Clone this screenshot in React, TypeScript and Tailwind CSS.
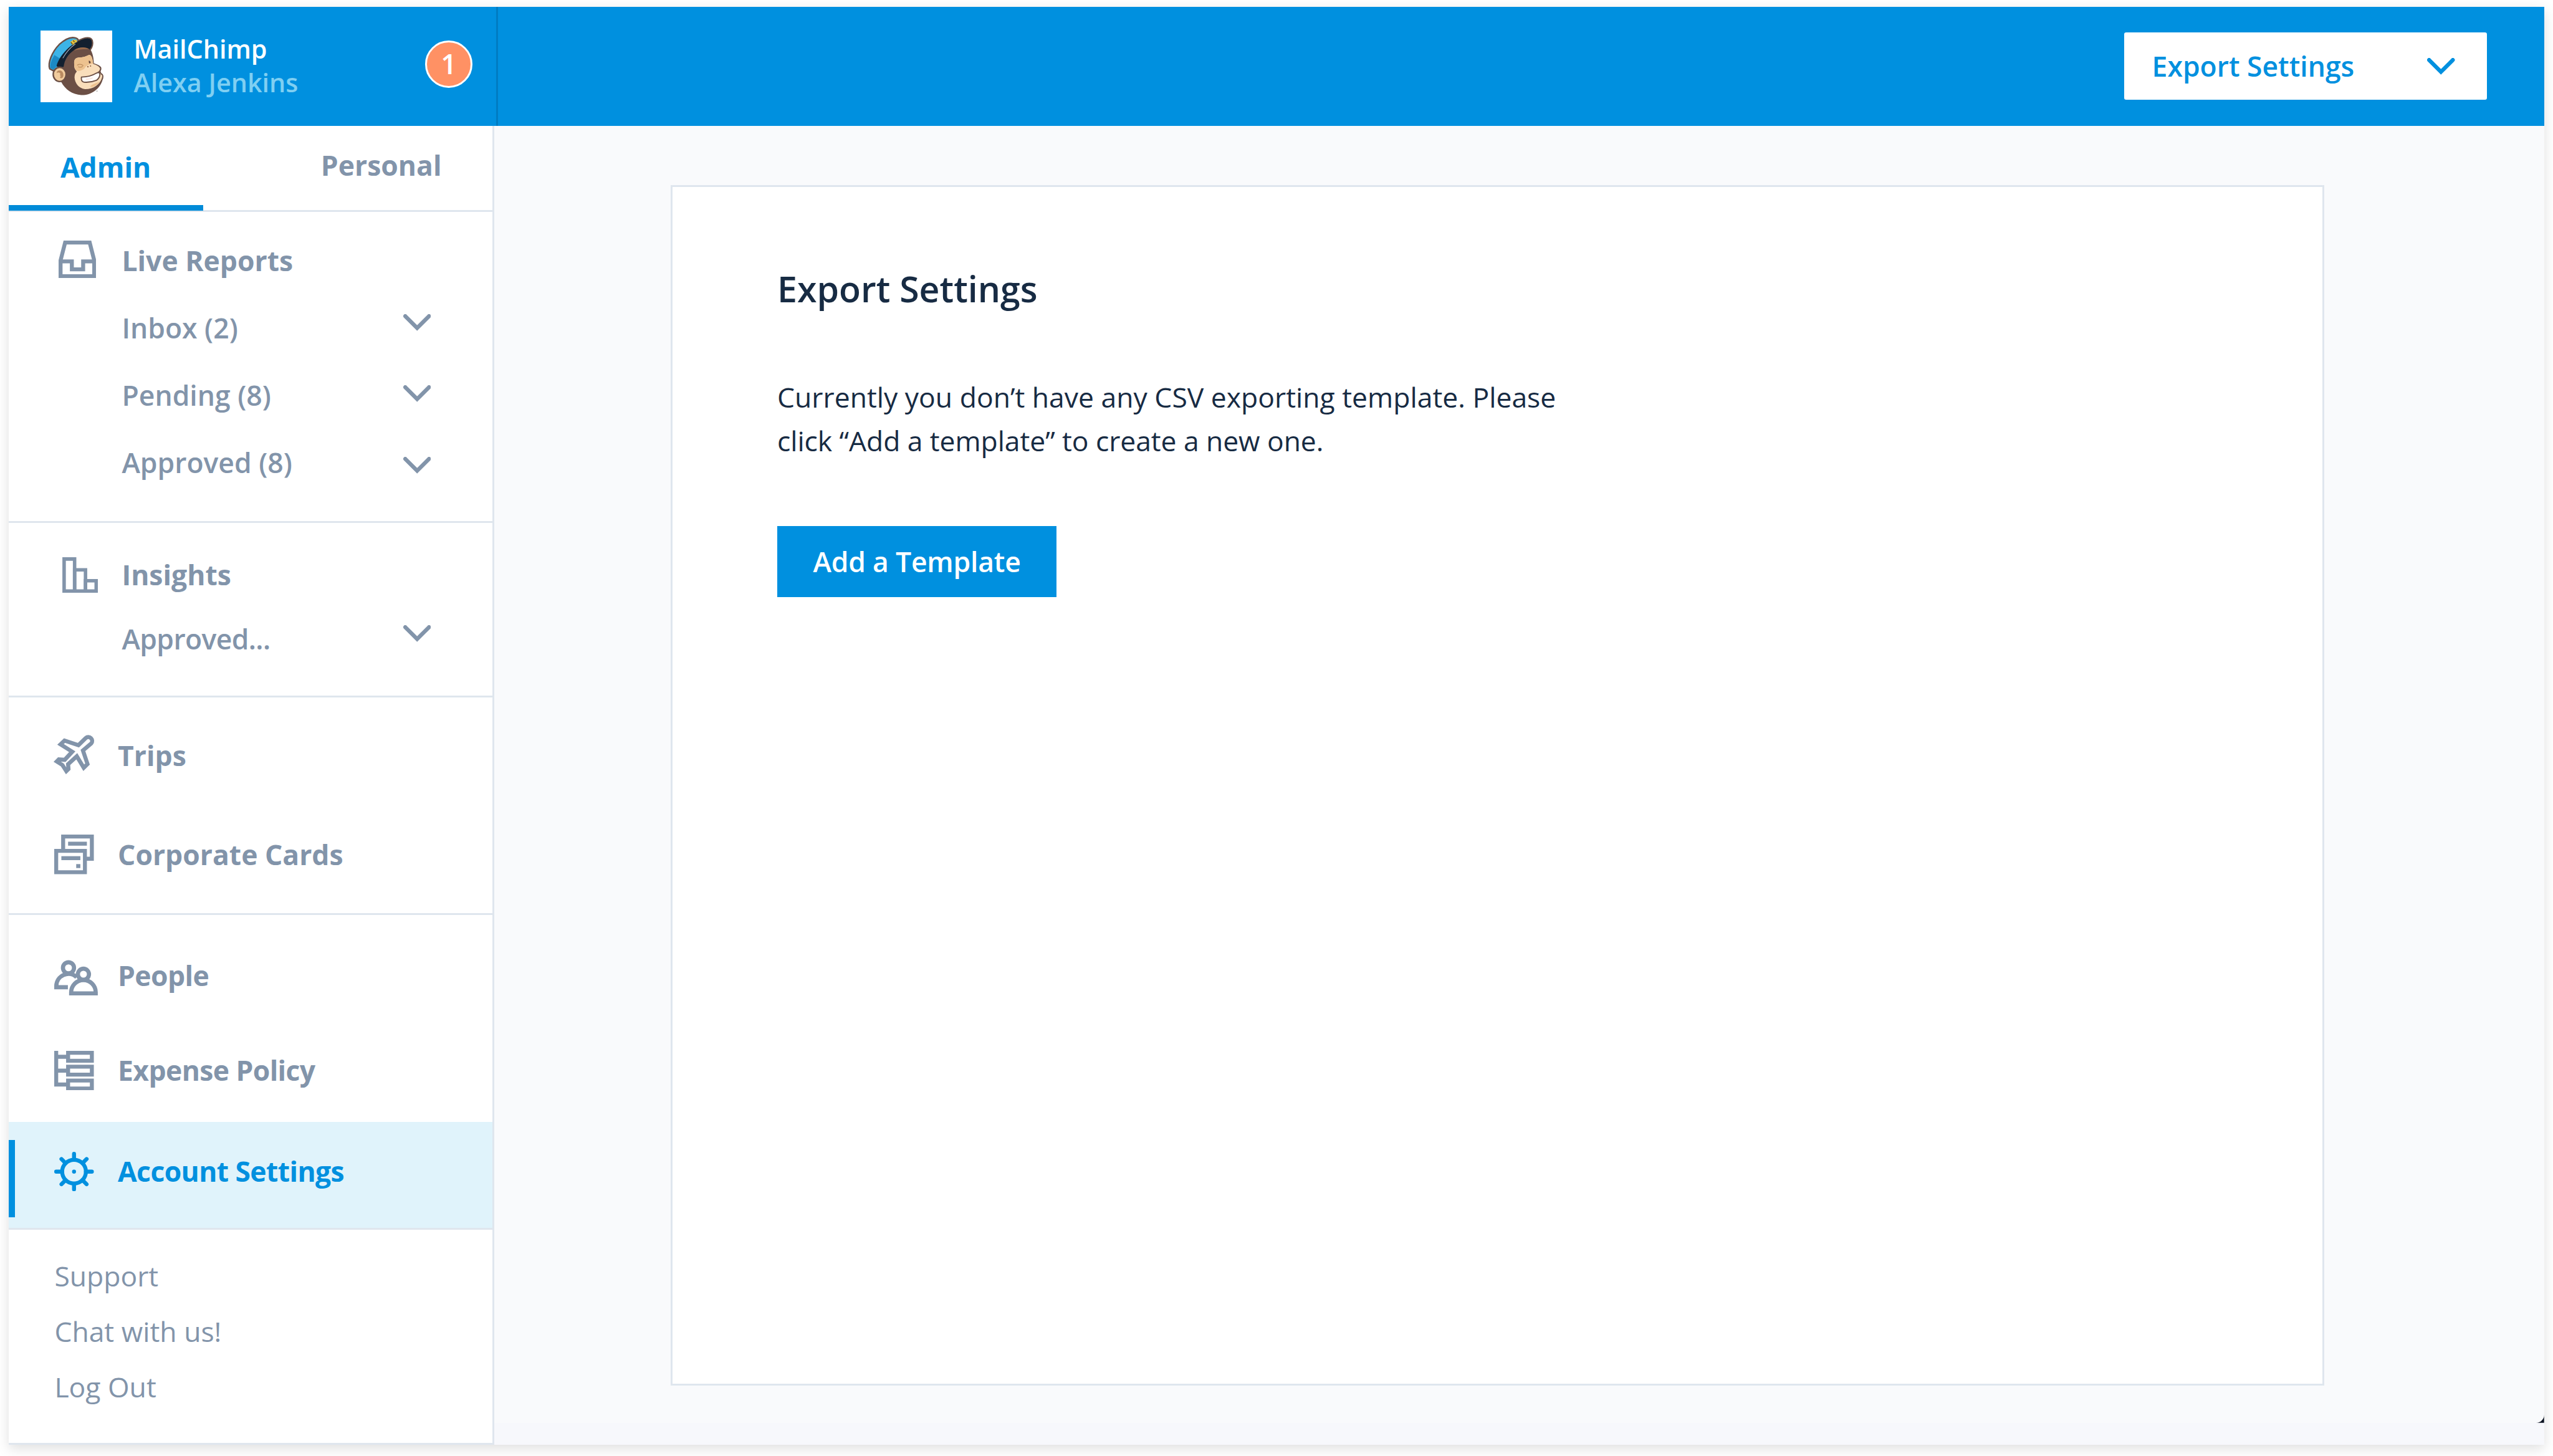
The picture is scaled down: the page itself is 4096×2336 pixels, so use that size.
import React from "react";

type IconProps = { className?: string };

function Chevron({ className = "" }: IconProps) {
  return (
    <svg viewBox="0 0 14 8.5" className={`h-[8.5px] w-[14px] shrink-0 ${className}`} fill="none" stroke="currentColor" strokeWidth="2" strokeLinecap="round">
      <path d="M1 1L7 7L13 1" />
    </svg>
  );
}

function InboxIcon() {
  return (
    <svg viewBox="0 0 19 19" className="h-[19px] w-[19px]" fill="none" stroke="currentColor" strokeWidth="2">
      <path d="M1 18V10L3.3 1H15.7L18 10V18Z" />
      <path d="M1 10.5H6.7V14.5H12.4V10.5H18" />
    </svg>
  );
}

function InsightsIcon() {
  return (
    <svg viewBox="0 0 18 18" className="h-[18px] w-[18px]" fill="none" stroke="currentColor" strokeWidth="1.75">
      <path d="M0.9 0.9H6.2V17.1H0.9Z" />
      <path d="M6.2 6.4H11.7V17.1H6.2Z" />
      <path d="M11.7 11.9H17.1V17.1H11.7Z" />
    </svg>
  );
}

function PlaneIcon() {
  return (
    <svg viewBox="0 0 20 20" className="h-5 w-5 overflow-visible" fill="none" stroke="currentColor" strokeWidth="2.05">
      <path d="M12.2 4.9L15.9 1.3A1.95 1.95 0 0 1 18.7 4L14.5 7.6L16.8 14.4L14.9 16.3L11.4 10.5L7 14.5L7.2 16.9L6.1 18L4.1 14.9L1.3 13.1L2.3 12.1L5.3 12.3L9.1 8.2L3.2 4.5L5.2 2.6Z" />
    </svg>
  );
}

function CardsIcon() {
  return (
    <svg viewBox="0 0 20 20" className="h-5 w-5" fill="none" stroke="currentColor" strokeWidth="2">
      <path d="M4.5 8V1H19V12.2H16" />
      <path d="M7 4.6H16.5" />
      <path d="M1 8.2H15.5V19H1Z" />
      <path d="M3.6 11.9H13.2" />
      <path d="M11.1 15.9H13.2" />
    </svg>
  );
}

function PeopleIcon() {
  return (
    <svg viewBox="0 0 22 18" className="h-[18px] w-[22px]" fill="none" stroke="currentColor" strokeWidth="2.1">
      <circle cx="7.2" cy="4" r="2.8" />
      <path d="M6.9 13.8H1.05V13.2A6.15 6.15 0 0 1 11.3 8.7" />
      <circle cx="14.75" cy="7.25" r="2.8" />
      <path d="M8.55 16.95V16.4A6.2 6.2 0 0 1 20.95 16.4V16.95Z" />
    </svg>
  );
}

function PolicyIcon() {
  return (
    <svg viewBox="0 0 20 20" className="h-5 w-5" fill="none" stroke="currentColor" strokeWidth="2">
      <path d="M1 0V17H7" />
      <path d="M1 3H7M1 10H7" />
      <path d="M7 1H19V5H7Z" />
      <path d="M7 8H19V12H7Z" />
      <path d="M7 15H19V19H7Z" />
    </svg>
  );
}

function GearIcon() {
  return (
    <svg viewBox="0 0 20 20" className="h-5 w-5" fill="none" stroke="currentColor" strokeWidth="2" strokeLinecap="round">
      <circle cx="10" cy="10" r="6" />
      <circle cx="10" cy="10" r="1" fill="currentColor" stroke="none" />
      <path d="M10 1V4M10 16V19M1 10H4M16 10H19M3.65 3.65L5.75 5.75M14.25 14.25L16.35 16.35M16.35 3.65L14.25 5.75M5.75 14.25L3.65 16.35" />
    </svg>
  );
}

function ChimpLogo() {
  return (
    <svg viewBox="66 36 432 432" className="h-9 w-9 shrink-0 bg-white">
      <path d="M190 345C185 300 195 200 250 150C290 120 345 125 368 150C384 175 388 205 389 234Q424 244 434 260Q438 272 430 283Q430 292 443 300Q452 314 442 335C425 392 370 429 312 427C260 424 215 395 190 345Z" fill="#6b4f45" />
      <path d="M143 279L122 268C108 235 135 165 180 120C215 88 250 74 275 80Q292 84 296 96L180 262Z" fill="#3db4e7" stroke="#6b4f45" strokeWidth="9" strokeLinejoin="round" />
      <path d="M150 184C130 220 122 245 127 264L145 273L164 252C170 235 178 220 186 207Z" fill="#1c8ac4" />
      <path d="M163 253C172 205 225 135 298 98C338 76 370 76 379 98C385 120 376 140 365 153C345 134 300 134 270 154C232 180 212 212 206 256Q185 262 163 253Z" fill="#13202f" />
      <path d="M296 97C338 73 372 74 380 97C386 120 377 140 366 154" fill="none" stroke="#6b4f45" strokeWidth="8" />
      <path d="M272 153C300 134 340 132 362 150C340 148 300 150 272 156Z" fill="#9a6b4b" />
      <path d="M202 202C220 170 245 140 276 118" fill="none" stroke="#a9b4c2" strokeWidth="4" strokeLinecap="round" />
      <path d="M246 104L258 98L262 90L272 94L284 90L288 106L276 110L262 124L254 118Z" fill="#e6c03c" />
      <path d="M250 107L260 120M264 96L272 106" stroke="#2c2a25" strokeWidth="4" />
      <ellipse cx="182" cy="302" rx="39" ry="43" fill="#f0cb9c" stroke="#6b4f45" strokeWidth="9" />
      <path d="M164 294C164 272 196 272 202 292C208 308 204 325 190 325C182 324 184 316 190 312Q180 306 187 298Q178 284 164 294Z" fill="#b98a60" />
      <path d="M270 240C268 210 278 200 300 199C335 200 350 184 365 183C378 190 383 215 385 238Q421 249 427 266Q424 282 408 290Q430 290 432 302Q443 305 439 320C426 365 385 392 335 391C298 386 275 355 272 320Q272 297 286 284Q268 268 270 240Z" fill="#f9debb" />
      <path d="M270 240C268 210 278 200 300 199C335 200 350 184 365 183C378 190 383 215 384 236Q345 240 330 268Q305 285 286 280Q268 266 270 240Z" fill="#edc28f" />
      <path d="M366 378C376 360 400 358 424 346C408 368 390 380 366 378Z" fill="#edc28f" />
      <path d="M290 245Q308 234 324 248M296 256Q308 262 320 254" fill="none" stroke="#bd8e5e" strokeWidth="5" strokeLinecap="round" />
      <path d="M359 217Q357 228 362 235Q370 236 370 228Q368 220 359 217Z" fill="#5c4038" />
      <circle cx="353" cy="255" r="4.500" fill="#9a6b4b" />
      <circle cx="369" cy="251" r="4" fill="#9a6b4b" />
      <path d="M314 318Q365 318 405 294Q424 284 426 302Q424 326 404 338Q370 352 330 349Q310 345 314 318Z" fill="#ffffff" stroke="#6b4f45" strokeWidth="7" strokeLinejoin="round" />
      <path d="M340 330Q365 333 382 322" fill="none" stroke="#f6d9cf" strokeWidth="5" />
      <path d="M403 403H413" stroke="#b4b4b4" strokeWidth="5" />
    </svg>
  );
}

function NavItem({ icon, label, tight = false }: { icon: React.ReactNode; label: string; tight?: boolean }) {
  return (
    <div className="flex h-5 items-start pl-[23px] font-bold">
      <span className="mt-[0.5px] flex h-5 w-8 items-center">{icon}</span>
      <span className={`mt-[0.4px] ${tight ? "tracking-[-0.19px]" : ""}`}>{label}</span>
    </div>
  );
}

function Header() {
  return (
    <header className="flex h-[60px] items-start bg-[#0090df] text-white">
      <div className="flex h-full w-[247px] items-start border-r border-[#007cc2] pl-4">
        <div className="mt-3">
          <ChimpLogo />
        </div>
        <div className="mt-[12.6px] ml-[11px] flex-1 text-[13px] leading-[17px] font-semibold">
          <div>MailChimp</div>
          <div className="text-[#7fcff2]">Alexa Jenkins</div>
        </div>
        <div className="mt-[17px] mr-3 flex h-6 w-6 items-center justify-center rounded-full border border-white bg-[#ff9164] pb-[0.5px] text-sm leading-none font-semibold">1</div>
      </div>
      <button className="mt-[13px] mr-[29px] ml-auto flex h-[34px] w-[183px] items-center justify-between rounded-[1px] bg-white pr-4 pl-[14px] text-sm font-semibold text-[#0090df]">
        <span className="pb-[0.2px]">Export Settings</span>
        <Chevron />
      </button>
    </header>
  );
}

function Sidebar() {
  return (
    <aside className="flex w-[245px] shrink-0 flex-col border-r border-[#dfe6ee] bg-white text-sm leading-5 text-[#8294aa]">
      <div className="relative flex h-[43.5px] border-b border-[#dfe6ee] font-bold">
        <div className="w-[157.5px] pt-[10.9px] pl-[26px] text-[#0090df]">Admin</div>
        <div className="pt-[9.9px]">Personal</div>
        <div className="absolute top-[40px] left-0 h-[3px] w-[98px] bg-[#008bd8]" />
      </div>

      <section className="h-[157px] border-b border-[#dfe6ee] pt-[14px]">
        <div className="flex h-[27px] items-start pl-[25px] font-bold">
          <span className="mt-[0.5px] w-8">
            <InboxIcon />
          </span>
          <span className="mt-[0.4px]">Live Reports</span>
        </div>
        <div className="flex justify-between pr-[31px] pl-[57px] font-semibold">
          <div className="pt-[0.4px] leading-[34px]">
            <div>Inbox (2)</div>
            <div>Pending (8)</div>
            <div>Approved (8)</div>
          </div>
          <div className="flex flex-col gap-[27.5px] pt-[10.6px]">
            <Chevron />
            <Chevron />
            <Chevron />
          </div>
        </div>
      </section>

      <section className="h-[88px] border-b border-[#dfe6ee] pt-4">
        <div className="flex h-8 items-start pl-[27px] font-bold">
          <span className="mt-[1.5px] w-[30px]">
            <InsightsIcon />
          </span>
          <span className="mt-[0.2px]">Insights</span>
        </div>
        <div className="flex items-start justify-between pr-[31px] pl-[57px] font-semibold">
          <span className="mt-[0.4px] tracking-[-0.19px]">Approved...</span>
          <Chevron className="mt-[3.8px]" />
        </div>
      </section>

      <section className="flex h-[110px] flex-col gap-[30px] border-b border-[#dfe6ee] pt-[19px]">
        <NavItem icon={<PlaneIcon />} label="Trips" />
        <NavItem icon={<CardsIcon />} label="Corporate Cards" />
      </section>

      <section className="border-b border-[#dfe6ee]">
        <div className="flex h-[104.5px] flex-col gap-7 pt-5">
          <NavItem
            icon={
              <span className="mt-[2px]">
                <PeopleIcon />
              </span>
            }
            label="People"
            tight
          />
          <NavItem icon={<PolicyIcon />} label="Expense Policy" tight />
        </div>
        <div className="relative h-[53.5px] bg-[#e0f3fb] pt-[14.5px] text-[#0090df]">
          <div className="absolute top-[9px] left-0 h-[39px] w-[3px] bg-[#0090df]" />
          <NavItem icon={<GearIcon />} label="Account Settings" tight />
        </div>
      </section>

      <section className="flex-1 border-b border-[#dfe6ee] pt-[9.5px] pl-[23px] leading-7">
        <div>Support</div>
        <div>Chat with us!</div>
        <div>Log Out</div>
      </section>
    </aside>
  );
}

function Main() {
  return (
    <main className="flex flex-1 flex-col bg-[#f7f8fc]">
      <div className="relative h-[655px] bg-[#f9fafc] pt-[30px] pl-[89px]">
        <div className="h-[606px] w-[835px] border border-[#dfe6ee] bg-white pt-[39.4px] pl-[53px] text-[#172b43]">
          <h1 className="text-lg leading-6 font-semibold">Export Settings</h1>
          <p className="mt-[31.5px] text-sm leading-[22px]">
            Currently you don’t have any CSV exporting template. Please
            <br />
            <span className="tracking-[-0.025px]">click “Add a template” to create a new one.</span>
          </p>
          <button className="mt-[32.2px] flex h-9 w-[141px] items-center justify-center bg-[#0090df] pb-[0.4px] text-sm font-semibold tracking-[-0.06px] text-white">Add a Template</button>
        </div>
        <svg viewBox="0 0 4 4" className="absolute right-0 bottom-0 h-1 w-1" fill="#0a1220">
          <path d="M4 0A4 4 0 0 1 0 4H4Z" />
        </svg>
      </div>
    </main>
  );
}

export default function App() {
  return (
    <div className="h-[735px] w-[1289px] overflow-hidden bg-white pt-[3.5px] pl-[4.5px] font-['Open_Sans',sans-serif] [zoom:3.1777]">
      <div className="flex h-[726px] w-[1280px] flex-col shadow-[0_2px_6px_rgba(0,0,0,0.13)]">
        <Header />
        <div className="flex flex-1">
          <Sidebar />
          <Main />
        </div>
      </div>
    </div>
  );
}
